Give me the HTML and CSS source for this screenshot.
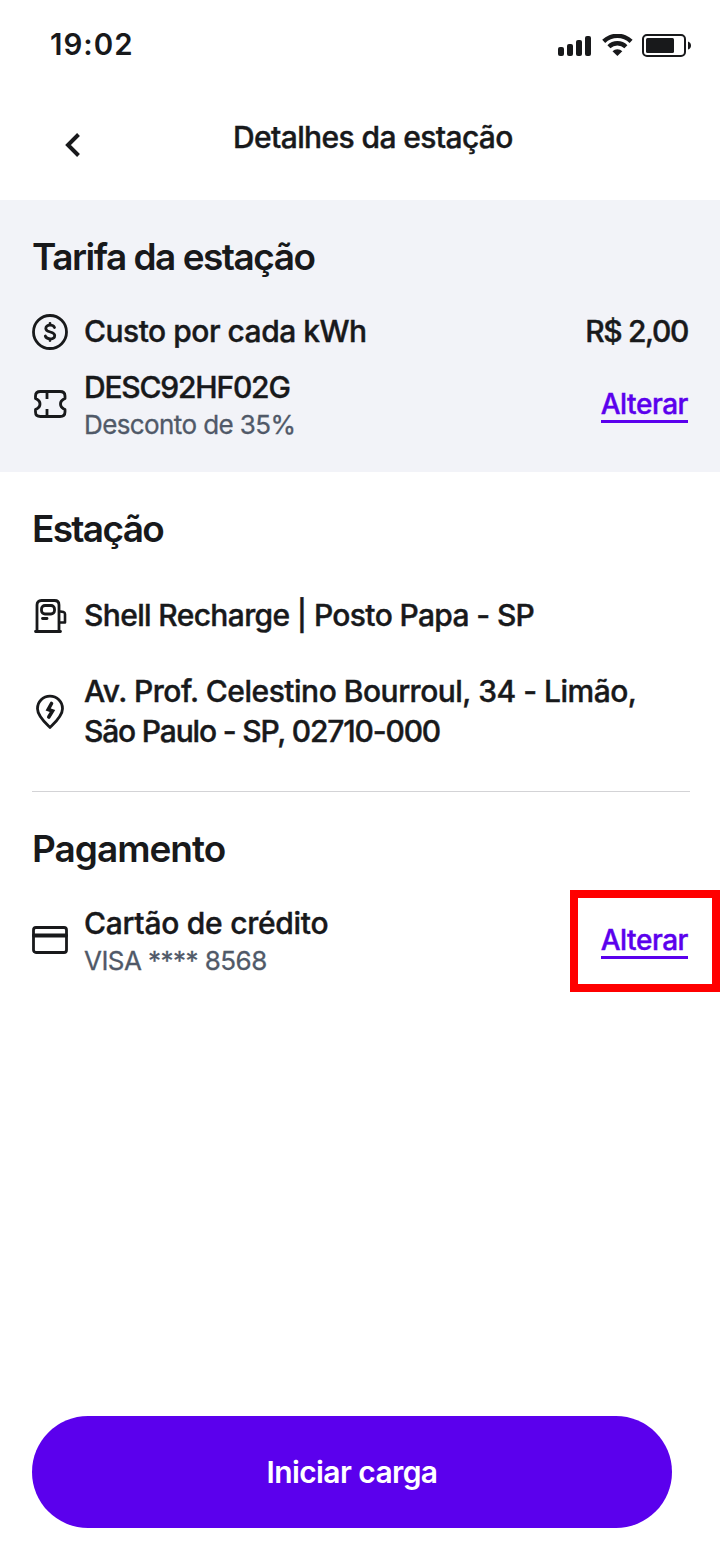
FILE: index.html
```html
<!DOCTYPE html>
<html lang="pt-BR">
<head>
<meta charset="utf-8">
<title>Detalhes da estação</title>
<link rel="stylesheet" href="styles.css">
</head>
<body>
<div class="screen">
  <div class="status">
    <span class="time">19:02</span>
    <svg class="indicators" width="134" height="24" viewBox="0 0 134 24" fill="#18191b">
      <rect x="0" y="13" width="6" height="9" rx="2"/><rect x="9" y="10" width="6" height="12" rx="2"/><rect x="18" y="6" width="6" height="16" rx="2"/><rect x="27" y="2" width="6" height="20" rx="2"/>
      <path d="M44.2 5.8a21.8 21.8 0 0 1 30.4 0l-3 3.1a17.4 17.4 0 0 0-24.4 0z"/>
      <path d="M49.4 11.2a14.2 14.2 0 0 1 20 0l-3 3.1a10 10 0 0 0-14 0z"/>
      <path d="M54.5 17.2a7 7 0 0 1 9.8 0l-4.9 4.8z"/>
      <rect x="85" y="1" width="42" height="21" rx="4" fill="none" stroke="#18191b" stroke-width="2"/>
      <rect x="88" y="4" width="28" height="15" rx="1.5"/><path d="M130 7.5q3 1 3 4t-3 4z"/>
    </svg>
  </div>
  <header class="header">
    <svg class="back" width="18" height="26" viewBox="0 0 18 26" fill="none" stroke="#18191b" stroke-width="4"><path d="M14.5 2.5 4 13l10.500 10.500"/></svg>
    <h1 class="page-title">Detalhes da estação</h1>
  </header>
  <section class="tariff">
    <h2 class="heading h-tariff">Tarifa da estação</h2>
    <div class="row row-cost">
      <svg class="icon" viewBox="0 0 36 36"><circle cx="18" cy="18" r="16.500"/><path d="M22.500 13.500c-.7-1.700-2.300-2.300-4.500-2.300-2.700 0-4.200 1.200-4.200 3.300 0 4.700 8.900 2.300 8.900 6.900 0 2.200-1.700 3.400-4.500 3.400-2.600 0-4.300-.9-4.900-2.800M18 9.500v1.500M18 25v1.500"/></svg>
      <span class="label l-cost">Custo por cada kWh</span><span class="price">R$ 2,00</span>
    </div>
    <div class="row row-coupon">
      <svg class="icon" viewBox="0 0 36 36"><path d="M8.500 5.500H28q5 0 5 4.500v2.500l-1.500.8q-3 1.700-3 4.700t3 4.700l1.500.8V26q0 4.500-5 4.500H8.500q-5 0-5-4.500v-2.500l1.500-.8q3-1.700 3-4.700t-3-4.700l-1.500-.8V10q0-4.500 5-4.500z"/><path d="M15 6V13M15 23v7" stroke-linecap="butt"/></svg>
      <div class="stack"><span class="label l-code">DESC92HF02G</span><span class="sub s-discount">Desconto de 35%</span></div>
      <a class="change">Alterar</a>
    </div>
  </section>
  <section class="station">
    <h2 class="heading h-station">Estação</h2>
    <div class="row row-name">
      <svg class="icon icon-low" viewBox="0 0 36 36"><path d="M5 33V7q0-4.500 4.500-4.500h13q4.500 0 4.500 4.500v26M3.500 33.500h25"/><path d="M28.500 13.500l3 .6q1.500.4 1.500 2V24.500h-5" stroke-width="2.600"/><rect x="9.500" y="7.500" width="13" height="8.500" rx="3.500"/><path d="M10.500 20.500h4.500"/></svg>
      <span class="label l-name">Shell Recharge | Posto Papa - SP</span>
    </div>
    <div class="row row-address">
      <svg class="icon icon-low" viewBox="0 0 36 36"><path d="M18 33.500C13.500 29 5.500 22 5.500 14.700a12.500 12.500 0 0 1 25 0C30.500 22 22.500 29 18 33.500z"/><path d="M19.500 9.500 16.200 15.500l4.300 1.500-3.700 6" stroke-width="3.600" stroke-linejoin="miter"/></svg>
      <div class="stack"><span class="label l-street">Av. Prof. Celestino Bourroul, 34 - Limão,</span><span class="label l-city">São Paulo - SP, 02710-000</span></div>
    </div>
  </section>
  <section class="payment">
    <h2 class="heading h-pay">Pagamento</h2>
    <div class="row row-card">
      <svg class="icon icon-card" viewBox="0 0 36 36"><rect x="1.500" y="5.500" width="33" height="25" rx="2.500"/><path d="M2 13.500h32" stroke-width="4"/></svg>
      <div class="stack"><span class="label l-card">Cartão de crédito</span><span class="sub s-visa">VISA **** 8568</span></div>
      <div class="highlight"><a class="change">Alterar</a></div>
    </div>
  </section>
  <button class="start"><span class="start-text">Iniciar carga</span></button>
</div>
</body>
</html>
```
FILE: styles.css
```css
* { box-sizing: border-box; }
body { margin: 0; background: #fff; color: #18191b; font-family: Inter, "Liberation Sans", sans-serif; }
.screen { width: 720px; height: 1560px; display: flex; flex-direction: column; overflow: hidden; }
.status { height: 88px; display: flex; justify-content: space-between; padding: 24px 28px 0 50px; }
.time { font-size: 29.500px; font-weight: 600; line-height: 40px; letter-spacing: 1px; }
.indicators { margin-top: 10px; }
.header { height: 112px; display: flex; padding-left: 64px; }
.back { margin-top: 44px; }
.page-title { margin: 29px 0 0 151px; font-size: 30px; line-height: 40px; font-weight: 500; white-space: nowrap; letter-spacing: -.620px; }
.page-title, .label, .price, .change { -webkit-text-stroke: .4px currentColor; }
.tariff { height: 272px; padding: 33px 32px 0; background: #f2f3f8; }
.station { height: 320px; margin: 0 30px 0 32px; padding-top: 33px; border-bottom: 1px solid #d3d3d6; }
.payment { padding: 33px 0 0 32px; }
.heading { margin: 0; font-size: 37px; line-height: 48px; font-weight: 600; letter-spacing: -1px; white-space: nowrap; }
.h-tariff { letter-spacing: -1.500px; }
.h-station { letter-spacing: -1.700px; }
.row { display: flex; align-items: center; gap: 16px; }
.icon { width: 36px; height: 36px; flex: none; fill: none; stroke: #18191b; stroke-width: 2.800; stroke-linecap: round; stroke-linejoin: round; }
.icon-card { margin-bottom: 2px; }
.icon-low { margin-top: 2px; }
.label { font-size: 30px; line-height: 40px; font-weight: 500; white-space: nowrap; letter-spacing: -.500px; }
.l-code { letter-spacing: -1.200px; }
.l-name { letter-spacing: -.640px; }
.l-city { letter-spacing: -1.170px; }
.l-card { letter-spacing: -.270px; }
.sub { font-size: 26px; line-height: 36px; color: #505968; white-space: nowrap; font-weight: 400; -webkit-text-stroke: .3px currentColor; }
.s-discount { letter-spacing: -.600px; }
.s-visa { letter-spacing: -.550px; }
.stack { display: flex; flex-direction: column; }
.row-cost { height: 40px; margin-top: 30px; }
.row-cost .icon { margin-top: 1px; }
.price { margin-left: auto; font-size: 30px; font-weight: 500; letter-spacing: -1.350px; }
.row-coupon { height: 72px; margin-top: 17px; }
.row-coupon .stack { padding-top: 2px; }
.row-coupon .change { margin-top: 1px; }
.change { margin-left: auto; height: 36px; font-size: 28px; line-height: 35px; font-weight: 500; letter-spacing: -.450px; color: #5b00ed; border-bottom: 3px solid #5b00ed; white-space: nowrap; }
.row-name { height: 40px; margin-top: 42px; }
.row-address { height: 80px; margin-top: 36px; }
.row-card { height: 102px; margin-top: 17px; }
.highlight { margin-left: auto; width: 150px; height: 102px; border: 8px solid #f00; display: flex; align-items: center; padding-right: 24px; }
.start { width: 640px; height: 112px; margin: auto 0 32px 32px; border: 0; border-radius: 56px; background: #5b00ed; color: #fff; font: 600 30px/40px Inter, "Liberation Sans", sans-serif; }
.start-text { letter-spacing: -.6px; }
```
